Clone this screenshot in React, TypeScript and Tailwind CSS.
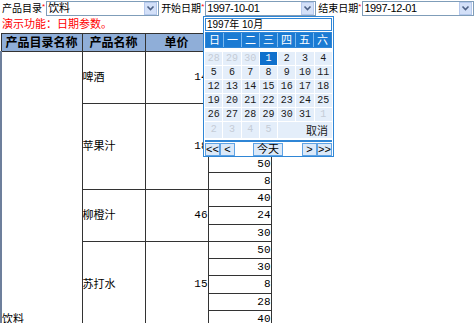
import React from "react";

const CJK = "font-['Liberation_Sans','Noto_Sans_CJK_SC',sans-serif]";
const MONO = "font-['Liberation_Mono','Noto_Sans_CJK_SC',monospace]";

function Chevron() {
  return (
    <div className="flex h-[13px] w-[13px] items-center justify-center border border-[#b5c8ec] bg-[#d3e0f8]">
      <svg width="9" height="7" viewBox="0 0 9 7">
        <path d="M1.5 1.5 L4.5 4.5 L7.5 1.5" stroke="#4d6185" strokeWidth="1.6" fill="none" />
      </svg>
    </div>
  );
}

function Label({ text }: { text: string }) {
  return (
    <span className="flex items-start text-[10px] leading-none text-black">
      {text}
      <span className="text-[8px] text-[#ff0000] leading-none -mt-[1px]">*</span>
    </span>
  );
}

type Prod = { name: string; price: string; qty: string[] };
const prods: Prod[] = [
  { name: "啤酒", price: "14", qty: ["20", "35", "12"] },
  { name: "苹果汁", price: "18", qty: ["30", "20", "10", "50", "8"] },
  { name: "柳橙汁", price: "46", qty: ["40", "24", "30"] },
  { name: "苏打水", price: "15", qty: ["50", "30", "8", "28", "40"] },
  { name: "矿泉水", price: "12", qty: ["25", "30", "18", "40", "10"] },
  { name: "绿茶", price: "20", qty: ["30", "12", "40", "15", "22"] },
  { name: "汽水", price: "10", qty: ["20", "15", "30", "12", "25"] },
];

const weekdays = ["日", "一", "二", "三", "四", "五", "六"];
const days: { d: string; other?: boolean; sel?: boolean }[] = [
  { d: "28", other: true },
  { d: "29", other: true },
  { d: "30", other: true },
  { d: "1", sel: true },
  ...Array.from({ length: 30 }, (_, i) => ({ d: String(i + 2) })),
  { d: "1", other: true },
];

const navBtn = "flex h-[13px] w-[15px] items-center justify-center border border-[#5fa3e4] bg-[#dbe9f9]";

function Calendar() {
  return (
    <div className={`absolute left-[203px] top-[16px] w-[131px] border border-[#2f86d6] bg-white p-[1px] ${CJK}`}>
      <div className="flex h-[13px] items-center border border-[#2f86d6] bg-white pl-[1px] text-[10px] leading-none text-black">
        1997年 10月
      </div>
      <div className="mt-[1px] grid grid-cols-7 gap-px border border-[#2f86d6] bg-[#7ab8ee]">
        {weekdays.map((w) => (
          <div key={w} className="flex h-[14px] items-center justify-center bg-[#1b7bd3] text-[11px] leading-none text-white">
            {w}
          </div>
        ))}
      </div>
      <div className={`mt-[4px] grid grid-cols-7 gap-px bg-white ${MONO}`}>
        {days.map((c, i) => (
          <div
            key={i}
            className={
              c.sel
                ? "flex h-[13px] items-center justify-center bg-[#0f70cc] text-[10px] leading-none text-white"
                : c.other
                ? "flex h-[13px] items-center justify-center bg-[#e4eefa] text-[10px] leading-none text-[#c4ccd6]"
                : "flex h-[13px] items-center justify-center bg-[#e4eefa] text-[10px] leading-none text-[#1a1a1a]"
            }
          >
            {c.d}
          </div>
        ))}
      </div>
      <div className="grid grid-cols-7 gap-px bg-white pt-px">
        {["2", "3", "4", "5"].map((d) => (
          <div key={d} className={`flex h-[16px] items-center justify-center bg-[#e4eefa] text-[10px] leading-none text-[#c4ccd6] ${MONO}`}>
            {d}
          </div>
        ))}
        <div className="col-span-3 flex h-[16px] items-end justify-end bg-[#e4eefa] pr-[4px] pb-[1px] text-[11px] leading-none text-[#1a1a1a]">
          取消
        </div>
      </div>
      <div className="mt-[2px] flex h-[15px] items-center border-t-2 border-[#2f86d6] pt-[1px] text-[11px] leading-none text-black">
        <div className={navBtn}>&lt;&lt;</div>
        <div className={navBtn}>&lt;</div>
        <div className="ml-[18px] flex h-[13px] w-[30px] items-center justify-center border border-[#5fa3e4] bg-[#dbe9f9]">今天</div>
        <div className={`ml-auto ${navBtn}`}>&gt;</div>
        <div className={navBtn}>&gt;&gt;</div>
      </div>
    </div>
  );
}

export default function App() {
  let rowIdx = 0;
  const totalRows = prods.reduce((a, p) => a + p.qty.length, 0);
  return (
    <div className={`relative h-[323px] w-[476px] overflow-hidden bg-white ${CJK}`}>
      <div className="flex h-[16px] items-center pl-[2px] pt-[1px]">
        <Label text="产品目录" />
        <div className="ml-[1px] flex h-[15px] w-[113px] items-center justify-between border border-[#7f9db9] bg-white pl-[1px] pr-[1px] text-[11px] leading-none">
          <span>饮料</span>
          <Chevron />
        </div>
        <div className="ml-[2px]">
          <Label text="开始日期" />
        </div>
        <div className="ml-[1px] flex h-[15px] w-[111px] items-center justify-between border border-[#7f9db9] bg-white pl-[1px] pr-[1px] text-[11px] leading-none">
          <span className="font-['Liberation_Sans',sans-serif] tracking-[-0.4px]">1997-10-01</span>
          <Chevron />
        </div>
        <div className="ml-[2px]">
          <Label text="结束日期" />
        </div>
        <div className="ml-[1px] flex h-[15px] w-[112px] items-center justify-between border border-[#7f9db9] bg-white pl-[1px] pr-[1px] text-[11px] leading-none">
          <span className="font-['Liberation_Sans',sans-serif] tracking-[-0.4px]">1997-12-01</span>
          <Chevron />
        </div>
      </div>
      <div className="flex h-[17px] items-center pl-[2px] text-[11px] leading-none text-[#ff0000]">演示功能：日期参数。</div>
      <table className="table-fixed border-collapse text-[11px] leading-none text-black">
        <colgroup>
          <col className="w-[81px]" />
          <col className="w-[63px]" />
          <col className="w-[63px]" />
          <col className="w-[63px]" />
        </colgroup>
        <thead>
          <tr className="h-[18px] bg-[#8faed8]">
            <th className="border border-[#333] text-[12px] font-bold">产品目录名称</th>
            <th className="border border-[#333] text-[12px] font-bold">产品名称</th>
            <th className="border border-[#333] text-[12px] font-bold">单价</th>
            <th className="border border-[#333] text-[12px] font-bold">数量</th>
          </tr>
        </thead>
        <tbody>
          {prods.map((p) =>
            p.qty.map((q, j) => {
              const i = rowIdx++;
              return (
                <tr key={p.name + j} className={i % 4 === 1 ? "h-[18px]" : "h-[17px]"}>
                  {i === 0 && (
                    <td rowSpan={totalRows} className="border border-l-2 border-[#333] border-l-[#6d7f9c] align-middle text-left">
                      饮料
                    </td>
                  )}
                  {j === 0 && (
                    <td rowSpan={p.qty.length} className="border border-[#333] align-middle text-left">
                      {p.name}
                    </td>
                  )}
                  {j === 0 && (
                    <td rowSpan={p.qty.length} className={`border border-[#333] border-l-[#888] align-middle text-right ${MONO}`}>
                      {p.price}
                    </td>
                  )}
                  <td className={`border border-[#333] text-right align-middle ${MONO}`}>{q}</td>
                </tr>
              );
            })
          )}
        </tbody>
      </table>
      <Calendar />
    </div>
  );
}
